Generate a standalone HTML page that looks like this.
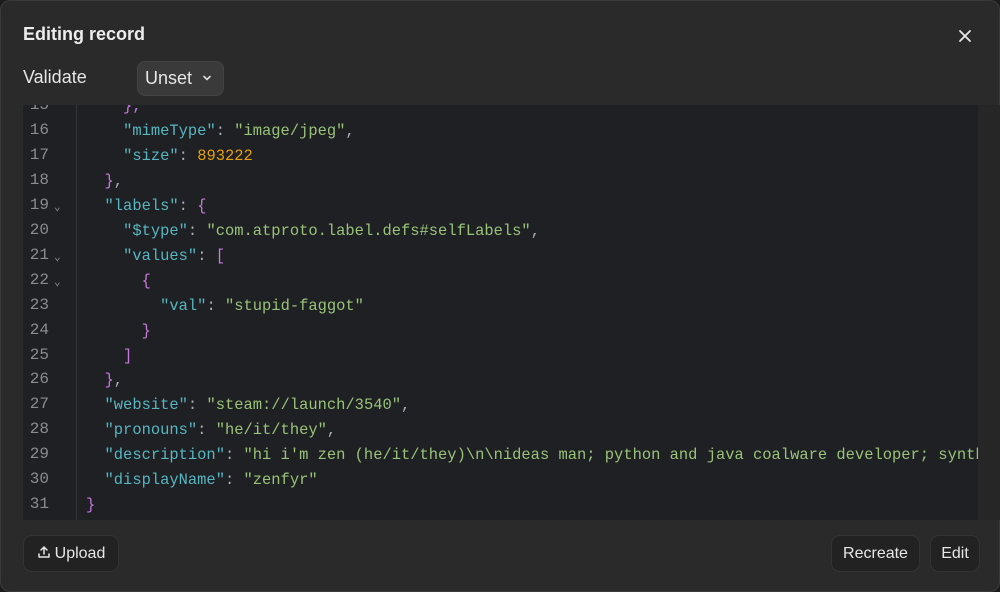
<!DOCTYPE html>
<html><head><style>
*{margin:0;padding:0;box-sizing:border-box}
body{width:1000px;height:592px;background:#1c1c1c;overflow:hidden;font-family:"Liberation Sans",sans-serif;color:#ececec}
.m{position:absolute;left:0;top:0;width:1000px;height:592px;background:#2a2a2a;border:1px solid #3a3a3a;border-radius:10px}
.t{position:absolute;left:22px;top:23px;font-size:18px;font-weight:bold;color:#ededed}
.x{position:absolute;left:956px;top:27px}
.v{position:absolute;left:22px;top:66px;font-size:18px;color:#e6e6e6}
.sel{position:absolute;left:136px;top:60px;width:87px;height:35px;background:#3a3a3a;border:1px solid #444;border-radius:8px;font-size:18px;padding:6px 0 0 7px;color:#e6e6e6}
.ed{position:absolute;left:22px;top:104px;width:955px;height:415px;background:#1f2023;overflow:hidden;font-family:"Liberation Mono",monospace;font-size:15.45px}
.g{position:absolute;left:0;top:0;width:54px;height:100%;border-right:1px solid #34353a;background:#1f2023}
.ln{position:absolute;left:0;width:26px;text-align:right;color:#8b8c90;font-size:16px;margin-top:1px}
.f{position:absolute;left:31px;color:#8b8c90;font-size:11px}
.c{position:absolute;left:63px;white-space:pre;color:#c678dd;margin-top:1.5px}
.k{color:#56b6c2}.s{color:#98c379}.n{color:#e5a00d}.q{color:#a7aeb6}
.sb{position:absolute;left:977px;top:104px;width:22px;height:415px;background:#262626}
.b{position:absolute;top:534px;height:37px;background:#222;border:1px solid #333;border-radius:9px;font-size:16px;color:#e6e6e6;padding:9px 0 0 0;text-align:center}
</style></head><body>
<div class="m">
<div class="t">Editing record</div>
<svg class="x" width="16" height="16" viewBox="0 0 16 16"><path d="M3 3L13 13M13 3L3 13" stroke="#e8e8e8" stroke-width="1.8" stroke-linecap="round"/></svg>
<div class="v">Validate</div>
<div class="sel">Unset <svg width="12" height="12" viewBox="0 0 12 12" style="margin-left:4px"><path d="M3 4.5L6 7.5L9 4.5" stroke="#ddd" stroke-width="1.6" fill="none" stroke-linecap="round"/></svg></div>
<div class="ed">
<div class="g">
<div class="ln" style="top:-10px">15</div>
<div class="ln" style="top:15px">16</div>
<div class="ln" style="top:40px">17</div>
<div class="ln" style="top:65px">18</div>
<div class="ln" style="top:90px">19</div><div class="f" style="top:95px">⌄</div>
<div class="ln" style="top:115px">20</div>
<div class="ln" style="top:140px">21</div><div class="f" style="top:145px">⌄</div>
<div class="ln" style="top:165px">22</div><div class="f" style="top:170px">⌄</div>
<div class="ln" style="top:190px">23</div>
<div class="ln" style="top:215px">24</div>
<div class="ln" style="top:240px">25</div>
<div class="ln" style="top:264px">26</div>
<div class="ln" style="top:289px">27</div>
<div class="ln" style="top:314px">28</div>
<div class="ln" style="top:339px">29</div>
<div class="ln" style="top:364px">30</div>
<div class="ln" style="top:389px">31</div>
</div>
<div class="c" style="top:-10px">    },</div>
<div class="c" style="top:15px">    <span class="k">"mimeType"</span><span class="q">: </span><span class="s">"image/jpeg"</span><span class="q">,</span></div>
<div class="c" style="top:40px">    <span class="k">"size"</span><span class="q">: </span><span class="n">893222</span></div>
<div class="c" style="top:65px">  }<span class="q">,</span></div>
<div class="c" style="top:90px">  <span class="k">"labels"</span><span class="q">: </span>{</div>
<div class="c" style="top:115px">    <span class="k">"$type"</span><span class="q">: </span><span class="s">"com.atproto.label.defs#selfLabels"</span><span class="q">,</span></div>
<div class="c" style="top:140px">    <span class="k">"values"</span><span class="q">: </span>[</div>
<div class="c" style="top:165px">      {</div>
<div class="c" style="top:190px">        <span class="k">"val"</span><span class="q">: </span><span class="s">"stupid-faggot"</span></div>
<div class="c" style="top:215px">      }</div>
<div class="c" style="top:240px">    ]</div>
<div class="c" style="top:264px">  }<span class="q">,</span></div>
<div class="c" style="top:289px">  <span class="k">"website"</span><span class="q">: </span><span class="s">"steam://launch/3540"</span><span class="q">,</span></div>
<div class="c" style="top:314px">  <span class="k">"pronouns"</span><span class="q">: </span><span class="s">"he/it/they"</span><span class="q">,</span></div>
<div class="c" style="top:339px">  <span class="k">"description"</span><span class="q">: </span><span class="s">"hi i'm zen (he/it/they)\n\nideas man; python and java coalware developer; synth</span></div>
<div class="c" style="top:364px">  <span class="k">"displayName"</span><span class="q">: </span><span class="s">"zenfyr"</span></div>
<div class="c" style="top:389px">}</div>
</div>
<div class="sb"></div>
<div class="b" style="left:22px;width:96px"><svg width="14" height="14" viewBox="0 0 14 14" style="vertical-align:-1px;margin-right:4px"><path d="M7 9V2M4 5L7 2L10 5M2 9V12H12V9" stroke="#e6e6e6" stroke-width="1.5" fill="none" stroke-linecap="round" stroke-linejoin="round"/></svg>Upload</div>
<div class="b" style="left:830px;width:89px">Recreate</div>
<div class="b" style="left:929px;width:50px">Edit</div>
</div>
</body></html>
